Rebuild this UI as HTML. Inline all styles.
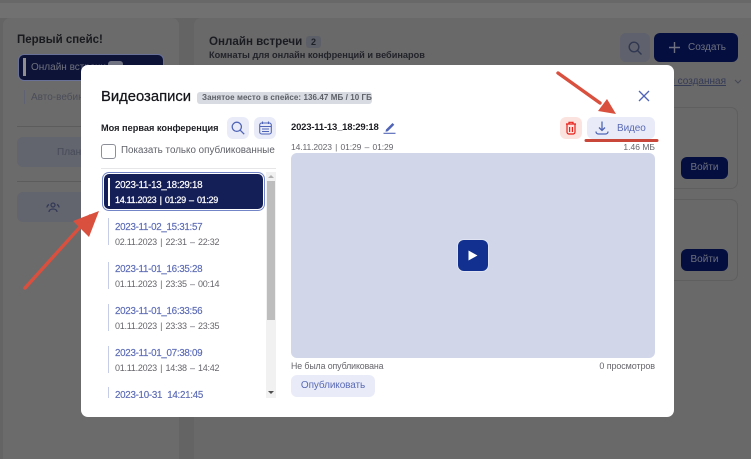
<!DOCTYPE html>
<html lang="ru">
<head>
<meta charset="utf-8">
<title>Видеозаписи</title>
<style>
html,body{margin:0;padding:0}
body{width:751px;height:459px;overflow:hidden;position:relative;background:#646464;font-family:"Liberation Sans",sans-serif}
.a{position:absolute;white-space:nowrap;box-sizing:border-box}
svg{position:absolute;overflow:visible}
.it{font-size:9.8px;color:#5a6ab5;letter-spacing:-.3px;line-height:13px;-webkit-text-stroke:.15px #5a6ab5}
.sb{font-size:9px;color:#66666c;letter-spacing:-.25px;word-spacing:1px;line-height:12px}
.bar{width:1px;background:#c5cde8;left:108px;height:27px}
.m{-webkit-text-stroke:.25px currentColor}
</style>
</head>
<body>
<!-- background -->
<div class="a" style="left:0;top:0;width:751px;height:3px;background:#686868"></div>
<div class="a" style="left:0;top:3px;width:751px;height:15px;background:#717171"></div>
<div class="a" style="left:3px;top:18px;width:176px;height:441px;background:#6b6b6b;border-radius:7px 7px 0 0"></div>
<div class="a" style="left:194px;top:18px;width:557px;height:441px;background:#696969;border-radius:7px 0 0 0"></div>

<div class="a" style="left:17px;top:33px;font-size:11.5px;font-weight:bold;color:#191a1e;line-height:15px">Первый спейс!</div>
<div class="a" style="left:18px;top:54px;width:146px;height:27px;background:#0d1336;border:1px solid #6a7198;border-radius:6px"></div>
<div class="a" style="left:23px;top:58px;width:3px;height:18px;background:#8f8f90"></div>
<div class="a" style="left:31px;top:61px;font-size:10px;color:#70727e;line-height:13px">Онлайн встречи</div>
<div class="a" style="left:108px;top:61px;width:15px;height:12px;background:#6f7280;border-radius:3px"></div>
<div class="a" style="left:24px;top:90px;width:1px;height:14px;background:#5f6272"></div>
<div class="a" style="left:31px;top:91px;font-size:10px;color:#4b4d59;line-height:13px">Авто-вебинары</div>
<div class="a" style="left:17px;top:126px;width:146px;height:1px;background:#5c5c5c"></div>
<div class="a" style="left:17px;top:137px;width:146px;height:30px;background:#62656e;border-radius:6px"></div>
<div class="a" style="left:57px;top:146px;font-size:10px;color:#474a58;line-height:13px">Планировщик</div>
<div class="a" style="left:17px;top:181px;width:146px;height:1px;background:#5c5c5c"></div>
<div class="a" style="left:17px;top:192px;width:146px;height:30px;background:#62656e;border-radius:6px"></div>
<svg style="left:46px;top:200px" width="14" height="14" viewBox="0 0 14 14" fill="none" stroke="#343a56" stroke-width="1.3"><circle cx="7" cy="5" r="2"/><path d="M3 12c0-2 2-3 4-3s4 1 4 3M1 7.500c0-1.500 1-2.500 2-3M13 7.500c0-1.500-1-2.500-2-3"/></svg>

<div class="a" style="left:209px;top:34px;font-size:11.6px;font-weight:bold;color:#1b1c22;line-height:16px">Онлайн встречи</div>
<div class="a" style="left:306px;top:36px;width:15px;height:12px;background:#5d5f68;border-radius:3px;font-size:9px;color:#1e2028;text-align:center;line-height:12px;font-weight:bold">2</div>
<div class="a" style="left:209px;top:49px;font-size:9.2px;font-weight:bold;color:#22232a;line-height:13px">Комнаты для онлайн конфренций и вебинаров</div>
<div class="a" style="left:620px;top:33px;width:30px;height:29px;background:#5f626c;border-radius:6px"></div>
<svg style="left:628px;top:41px" width="15" height="15" viewBox="0 0 15 15" fill="none" stroke="#303750" stroke-width="1.4"><circle cx="6" cy="6" r="4.800"/><path d="M9.500 9.500l4 4"/></svg>
<div class="a" style="left:654px;top:33px;width:84px;height:29px;background:#050f3f;border-radius:6px"></div>
<svg style="left:668px;top:41px" width="13" height="13" viewBox="0 0 13 13" fill="none" stroke="#6e7182" stroke-width="1.4"><path d="M6.500 1v11M1 6.500h11"/></svg>
<div class="a" style="left:688px;top:41px;font-size:10px;color:#6d707e;line-height:13px">Создать</div>
<div class="a" style="right:25px;top:75px;font-size:10px;color:#353a55;line-height:13px;text-decoration:underline">я созданная</div>
<svg style="left:734px;top:79px" width="8" height="5" viewBox="0 0 8 5" fill="none" stroke="#454855" stroke-width="1"><path d="M1 1l3 3 3-3"/></svg>
<div class="a" style="left:660px;top:107px;width:78px;height:82px;border:1px solid #5f5f5f;border-left:0;border-radius:0 7px 7px 0"></div>
<div class="a" style="left:681px;top:157px;width:47px;height:22px;background:#050f3f;border-radius:6px;text-align:center;font-size:10px;color:#6d707e;line-height:22px">Войти</div>
<div class="a" style="left:660px;top:199px;width:78px;height:82px;border:1px solid #5f5f5f;border-left:0;border-radius:0 7px 7px 0"></div>
<div class="a" style="left:681px;top:249px;width:47px;height:22px;background:#050f3f;border-radius:6px;text-align:center;font-size:10px;color:#6d707e;line-height:22px">Войти</div>

<!-- modal -->
<div class="a" style="left:81px;top:65px;width:593px;height:352px;background:#fff;border-radius:7px"></div>
<div class="a m" style="left:101px;top:88px;font-size:14.8px;color:#14151a;line-height:18px">Видеозаписи</div>
<div class="a" style="left:197px;top:92px;width:175px;height:12px;background:#d9dbe3;border-radius:3px;font-size:8px;font-weight:bold;color:#5e6068;line-height:12px;padding-left:5px;letter-spacing:.08px">Занятое место в спейсе: 136.47 МБ / 10 ГБ</div>
<svg style="left:638px;top:90px" width="12" height="12" viewBox="0 0 12 12" fill="none" stroke="#4f64b6" stroke-width="1.300"><path d="M1 1l10 10M11 1L1 11"/></svg>

<div class="a" style="left:101px;top:122px;font-size:9.2px;font-weight:bold;color:#1c1d22;line-height:12px">Моя первая конференция</div>
<div class="a" style="left:227px;top:117px;width:22px;height:22px;background:#e9ecf8;border-radius:6px"></div>
<svg style="left:231px;top:121px" width="14" height="14" viewBox="0 0 14 14" fill="none" stroke="#4f64b6" stroke-width="1.300"><circle cx="5.800" cy="5.800" r="4.600"/><path d="M9.200 9.200l4 4"/></svg>
<div class="a" style="left:254px;top:117px;width:22px;height:22px;background:#e9ecf8;border-radius:6px"></div>
<svg style="left:259px;top:121px" width="13" height="14" viewBox="0 0 13 14" fill="none" stroke="#4f64b6" stroke-width="1.100"><rect x=".7" y="2" width="11.600" height="11" rx="2"/><path d="M.7 5.500h11.600M3.500 .5v2.500M9.500 .5v2.500M3 8h7M3 10.500h7" /></svg>

<div class="a" style="left:101px;top:144px;width:15px;height:15px;border:1px solid #8d8f98;border-radius:3px;background:#fff"></div>
<div class="a" style="left:121px;top:145px;font-size:9.8px;color:#60626a;letter-spacing:.02px;line-height:12px">Показать только опубликованные</div>
<div class="a" style="left:101px;top:168px;width:175px;height:1px;background:#e6e6e8"></div>

<!-- scrollbar -->
<div class="a" style="left:266px;top:172px;width:10px;height:226px;background:#f1f1f1"></div>
<div class="a" style="left:267px;top:181px;width:8px;height:139px;background:#bdbdbd"></div>
<div class="a" style="left:268px;top:175px;width:0;height:0;border:3px solid transparent;border-top:0;border-bottom:3px solid #b0b0b0"></div>
<div class="a" style="left:268px;top:391px;width:0;height:0;border:3px solid transparent;border-bottom:0;border-top:3px solid #505050"></div>

<!-- selected item -->
<div class="a" style="left:104px;top:174px;width:159px;height:35px;background:#151f57;border-radius:5px;box-shadow:0 0 0 1px #fff,0 0 0 2px #7385c6"></div>
<div class="a" style="left:108px;top:178px;width:2px;height:28px;background:#fff"></div>
<div class="a" style="left:115px;top:179px;font-size:9.8px;color:#fff;letter-spacing:-.3px;line-height:13px;-webkit-text-stroke:.2px #fff">2023-11-13_18:29:18</div>
<div class="a sb" style="left:115px;top:194px;color:#fff;font-size:9px;letter-spacing:-.3px;word-spacing:1px;-webkit-text-stroke:.25px #fff">14.11.2023 | 01:29 – 01:29</div>

<!-- list -->
<div class="a bar" style="top:218px"></div>
<div class="a it" style="left:115px;top:221px">2023-11-02_15:31:57</div>
<div class="a sb" style="left:115px;top:236px">02.11.2023 | 22:31 – 22:32</div>
<div class="a bar" style="top:262px"></div>
<div class="a it" style="left:115px;top:263px">2023-11-01_16:35:28</div>
<div class="a sb" style="left:115px;top:278px">01.11.2023 | 23:35 – 00:14</div>
<div class="a bar" style="top:304px"></div>
<div class="a it" style="left:115px;top:305px">2023-11-01_16:33:56</div>
<div class="a sb" style="left:115px;top:320px">01.11.2023 | 23:33 – 23:35</div>
<div class="a bar" style="top:346px"></div>
<div class="a it" style="left:115px;top:347px">2023-11-01_07:38:09</div>
<div class="a sb" style="left:115px;top:362px">01.11.2023 | 14:38 – 14:42</div>
<div class="a" style="left:101px;top:387px;width:165px;height:11px;overflow:hidden">
  <div class="a" style="left:7px;top:0;width:1px;height:11px;background:#c5cde8"></div>
  <div class="a it" style="left:14px;top:2px">2023-10-31_14:21:45</div>
</div>

<!-- right pane -->
<div class="a" style="left:291px;top:121px;font-size:9.5px;font-weight:bold;color:#1c1d22;letter-spacing:-.2px;line-height:13px">2023-11-13_18:29:18</div>
<svg style="left:383px;top:121px" width="13" height="13" viewBox="0 0 13 13"><path d="M3 8.500L9.500 2l1.800 1.800L4.800 10.300 2.500 10.800z" fill="#4f64b6"/><path d="M.5 12.300h12" stroke="#4f64b6" stroke-width="1.100"/></svg>
<div class="a" style="left:560px;top:117px;width:22px;height:22px;background:#fbe4e0;border-radius:6px"></div>
<svg style="left:565px;top:121px" width="12" height="14" viewBox="0 0 12 14" fill="none" stroke="#e8201a" stroke-width="1.200"><path d="M1 3h10M4 3V1.300h4V3"/><path d="M2 3.500v7.500a2 2 0 002 2h4a2 2 0 002-2V3.500"/><path d="M4.600 6v5M7.400 6v5"/></svg>
<div class="a" style="left:587px;top:117px;width:68px;height:22px;background:#e9ecf8;border-radius:6px"></div>
<svg style="left:595px;top:121px" width="14" height="14" viewBox="0 0 14 14" fill="none" stroke="#4f64b6" stroke-width="1.300"><path d="M7 .5v8.500M4 6.500L7 9.500l3-3"/><path d="M1 10.500c0 1.500 1 2.500 2.500 2.500h7c1.500 0 2.500-1 2.500-2.500"/></svg>
<div class="a" style="left:617px;top:122px;font-size:10px;color:#5a6ab5;letter-spacing:-.1px;line-height:13px">Видео</div>

<div class="a sb" style="left:291px;top:141px;font-size:8.5px;letter-spacing:-.1px;word-spacing:1px">14.11.2023 | 01:29 – 01:29</div>
<div class="a sb" style="right:96px;top:141px;font-size:8.5px;letter-spacing:0;word-spacing:0">1.46 МБ</div>

<div class="a" style="left:291px;top:153px;width:364px;height:205px;background:#d1d6e9;border-radius:6px"></div>
<div class="a" style="left:458px;top:240px;width:30px;height:31px;background:#11308f;border-radius:6px;box-shadow:0 0 0 1px #e0e4f2"></div>
<svg style="left:468px;top:250px" width="10" height="11" viewBox="0 0 10 11"><path d="M.5 .5L9.500 5.500.5 10.500z" fill="#fff"/></svg>

<div class="a sb" style="left:291px;top:360px;font-size:8.8px;letter-spacing:-.1px;word-spacing:0">Не была опубликована</div>
<div class="a sb" style="right:96px;top:360px;font-size:9px;letter-spacing:-.1px;word-spacing:0">0 просмотров</div>
<div class="a" style="left:291px;top:375px;width:84px;height:22px;background:#e9ecf8;border-radius:6px;text-align:center;font-size:10px;color:#5a6ab5;line-height:22px;letter-spacing:-.1px">Опубликовать</div>

<!-- annotations -->
<svg style="left:0;top:0" width="751" height="459" viewBox="0 0 751 459" fill="none">
  <path d="M25 288L90 216" stroke="#d9503f" stroke-width="3.400" stroke-linecap="round"/>
  <path d="M99 211L73 221 89 237z" fill="#d9503f"/>
  <path d="M558 73L600 103" stroke="#d9503f" stroke-width="3.400" stroke-linecap="round"/>
  <path d="M616 114L607 99 598 111z" fill="#d9503f"/>
  <path d="M586 140.500H657" stroke="#c9473a" stroke-width="3" stroke-linecap="round"/>
</svg>
</body>
</html>
